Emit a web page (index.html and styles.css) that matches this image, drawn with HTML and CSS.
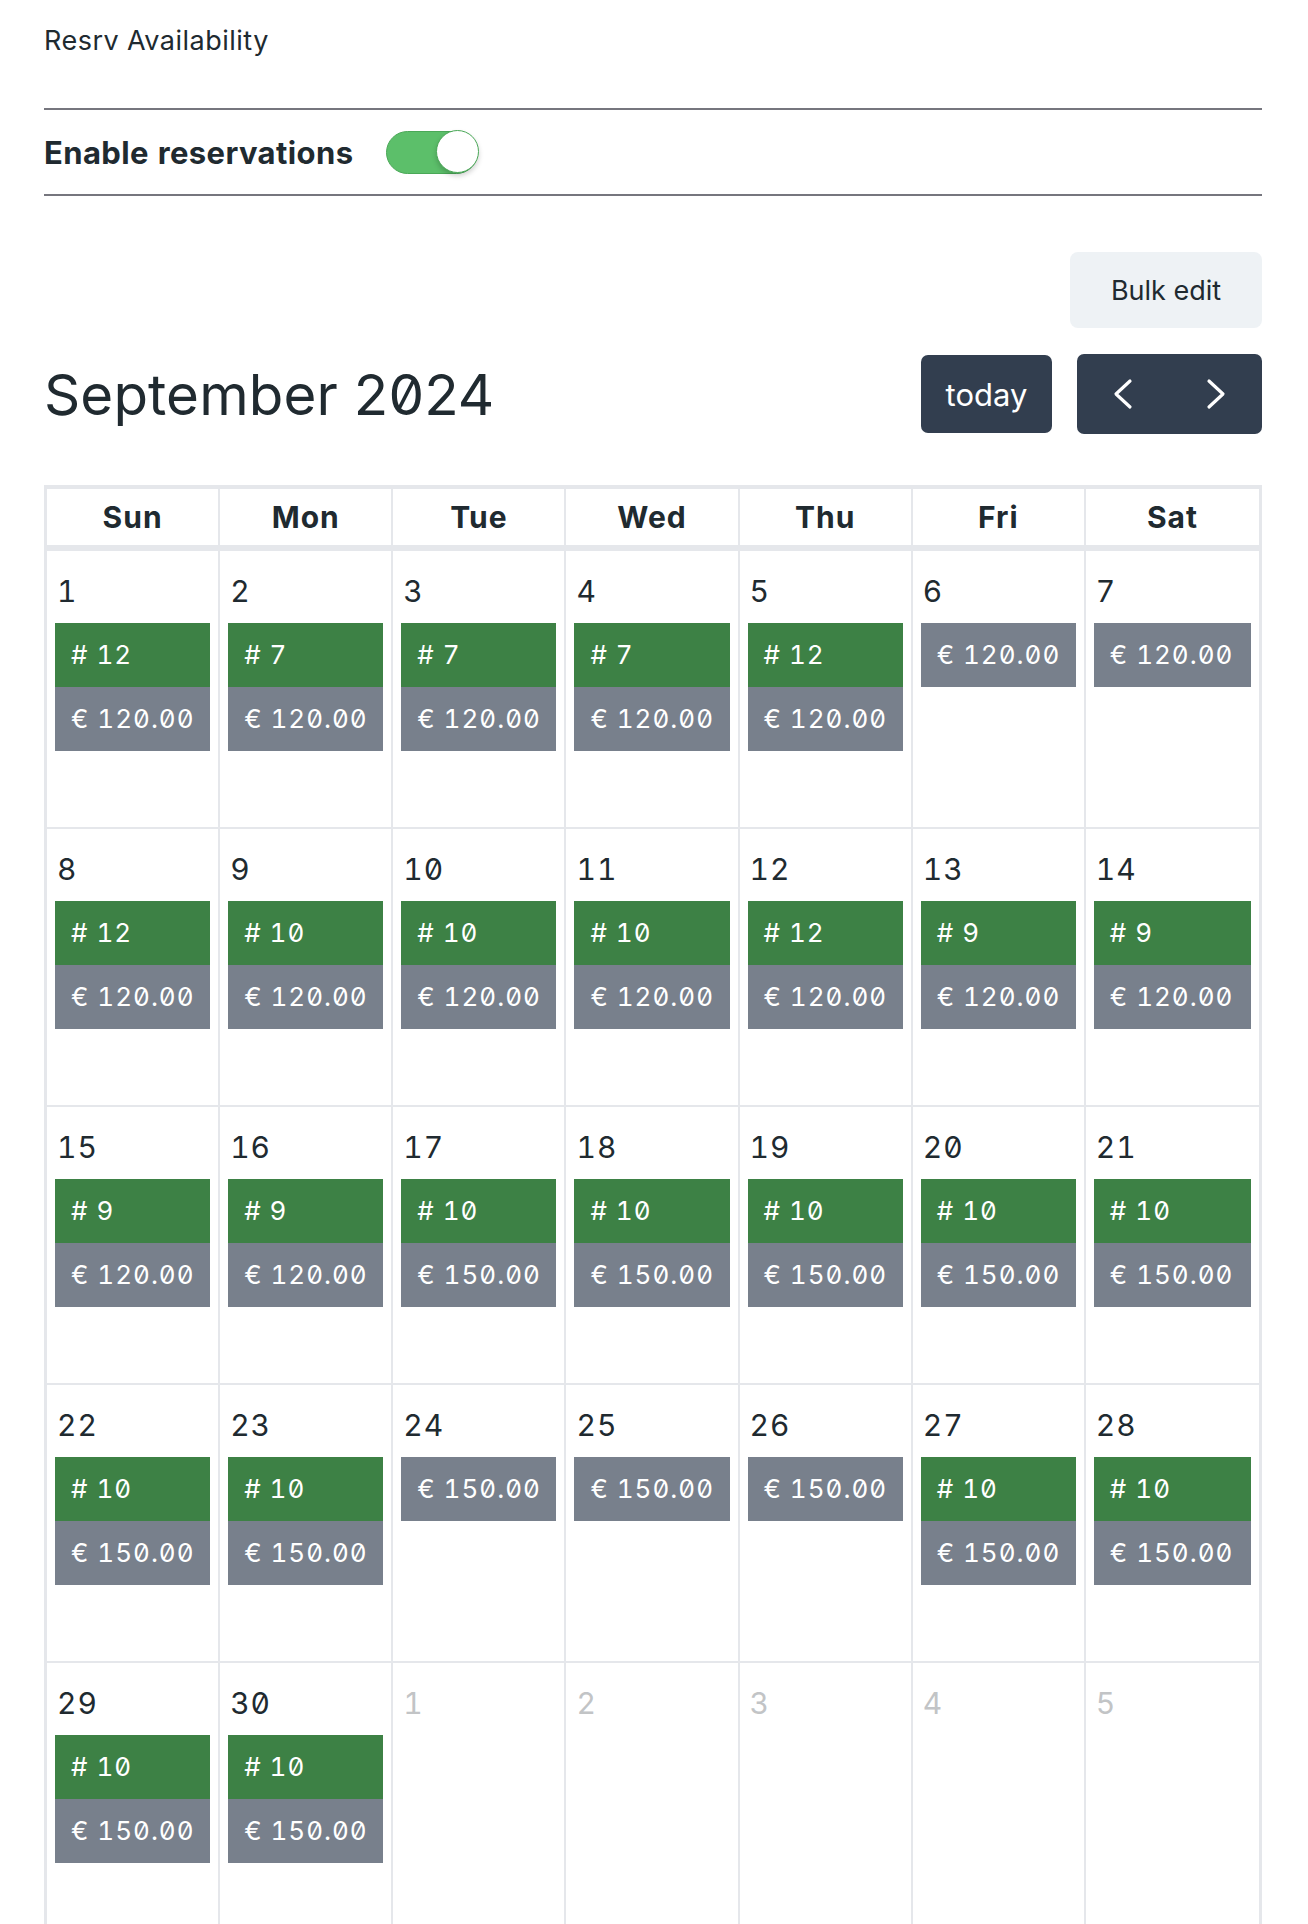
FILE: index.html
```html
<!DOCTYPE html>
<html lang="en">
<head>
<meta charset="utf-8">
<title>Resrv Availability</title>
<link rel="stylesheet" href="styles.css">
</head>
<body>
<div class="page">
  <div class="page-title">Resrv Availability</div>
  <div class="enable-row">
    <span class="enable-label">Enable reservations</span>
    <span class="toggle"><span class="knob"></span></span>
  </div>
  <div class="bulk-row"><button class="bulk-btn">Bulk edit</button></div>
  <div class="toolbar">
    <h2 class="month-title">September 2024</h2>
    <div class="toolbar-actions">
      <button class="btn btn-today">today</button>
      <div class="btn-group">
        <button class="btn btn-nav" aria-label="prev"><svg width="20" height="32" viewBox="0 0 20 32"><polyline points="17,3 3,16 17,29" fill="none" stroke="#fff" stroke-width="3.2" stroke-linecap="round" stroke-linejoin="round"/></svg></button>
        <button class="btn btn-nav" aria-label="next"><svg width="20" height="32" viewBox="0 0 20 32"><polyline points="3,3 17,16 3,29" fill="none" stroke="#fff" stroke-width="3.2" stroke-linecap="round" stroke-linejoin="round"/></svg></button>
      </div>
    </div>
  </div>
  <div class="calendar">
    <div class="cal-head">
      <div class="hcell">Sun</div><div class="hcell">Mon</div><div class="hcell">Tue</div><div class="hcell">Wed</div><div class="hcell">Thu</div><div class="hcell">Fri</div><div class="hcell">Sat</div>
    </div>
    <div class="cal-body">
      <div class="week">
        <div class="day"><div class="num">1</div><div class="ev ev-green"># 12</div><div class="ev ev-gray">€ 120.00</div></div>
        <div class="day"><div class="num">2</div><div class="ev ev-green"># 7</div><div class="ev ev-gray">€ 120.00</div></div>
        <div class="day"><div class="num">3</div><div class="ev ev-green"># 7</div><div class="ev ev-gray">€ 120.00</div></div>
        <div class="day"><div class="num">4</div><div class="ev ev-green"># 7</div><div class="ev ev-gray">€ 120.00</div></div>
        <div class="day"><div class="num">5</div><div class="ev ev-green"># 12</div><div class="ev ev-gray">€ 120.00</div></div>
        <div class="day"><div class="num">6</div><div class="ev ev-gray">€ 120.00</div></div>
        <div class="day"><div class="num">7</div><div class="ev ev-gray">€ 120.00</div></div>
      </div>
      <div class="week">
        <div class="day"><div class="num">8</div><div class="ev ev-green"># 12</div><div class="ev ev-gray">€ 120.00</div></div>
        <div class="day"><div class="num">9</div><div class="ev ev-green"># 10</div><div class="ev ev-gray">€ 120.00</div></div>
        <div class="day"><div class="num">10</div><div class="ev ev-green"># 10</div><div class="ev ev-gray">€ 120.00</div></div>
        <div class="day"><div class="num">11</div><div class="ev ev-green"># 10</div><div class="ev ev-gray">€ 120.00</div></div>
        <div class="day"><div class="num">12</div><div class="ev ev-green"># 12</div><div class="ev ev-gray">€ 120.00</div></div>
        <div class="day"><div class="num">13</div><div class="ev ev-green"># 9</div><div class="ev ev-gray">€ 120.00</div></div>
        <div class="day"><div class="num">14</div><div class="ev ev-green"># 9</div><div class="ev ev-gray">€ 120.00</div></div>
      </div>
      <div class="week">
        <div class="day"><div class="num">15</div><div class="ev ev-green"># 9</div><div class="ev ev-gray">€ 120.00</div></div>
        <div class="day"><div class="num">16</div><div class="ev ev-green"># 9</div><div class="ev ev-gray">€ 120.00</div></div>
        <div class="day"><div class="num">17</div><div class="ev ev-green"># 10</div><div class="ev ev-gray">€ 150.00</div></div>
        <div class="day"><div class="num">18</div><div class="ev ev-green"># 10</div><div class="ev ev-gray">€ 150.00</div></div>
        <div class="day"><div class="num">19</div><div class="ev ev-green"># 10</div><div class="ev ev-gray">€ 150.00</div></div>
        <div class="day"><div class="num">20</div><div class="ev ev-green"># 10</div><div class="ev ev-gray">€ 150.00</div></div>
        <div class="day"><div class="num">21</div><div class="ev ev-green"># 10</div><div class="ev ev-gray">€ 150.00</div></div>
      </div>
      <div class="week">
        <div class="day"><div class="num">22</div><div class="ev ev-green"># 10</div><div class="ev ev-gray">€ 150.00</div></div>
        <div class="day"><div class="num">23</div><div class="ev ev-green"># 10</div><div class="ev ev-gray">€ 150.00</div></div>
        <div class="day"><div class="num">24</div><div class="ev ev-gray">€ 150.00</div></div>
        <div class="day"><div class="num">25</div><div class="ev ev-gray">€ 150.00</div></div>
        <div class="day"><div class="num">26</div><div class="ev ev-gray">€ 150.00</div></div>
        <div class="day"><div class="num">27</div><div class="ev ev-green"># 10</div><div class="ev ev-gray">€ 150.00</div></div>
        <div class="day"><div class="num">28</div><div class="ev ev-green"># 10</div><div class="ev ev-gray">€ 150.00</div></div>
      </div>
      <div class="week">
        <div class="day"><div class="num">29</div><div class="ev ev-green"># 10</div><div class="ev ev-gray">€ 150.00</div></div>
        <div class="day"><div class="num">30</div><div class="ev ev-green"># 10</div><div class="ev ev-gray">€ 150.00</div></div>
        <div class="day other"><div class="num">1</div></div>
        <div class="day other"><div class="num">2</div></div>
        <div class="day other"><div class="num">3</div></div>
        <div class="day other"><div class="num">4</div></div>
        <div class="day other"><div class="num">5</div></div>
      </div>
    </div>
  </div>
</div>
</body>
</html>
```

FILE: styles.css
```css
* { box-sizing: border-box; }
html, body { margin: 0; padding: 0; background: #ffffff; }
body {
  font-family: Inter, "Noto Sans", "Liberation Sans", sans-serif;
  color: #202a30;
  font-feature-settings: "zero" 1, "tnum" 1;
}
.page {
  width: 1218px;
  margin-left: 44px;
  padding-top: 21px;
}
.page-title {
  font-size: 27px;
  line-height: 40px;
  letter-spacing: 0.5px;
  height: 89px;
  border-bottom: 2px solid #76767e;
}
.enable-row {
  display: flex;
  align-items: center;
  gap: 33px;
  height: 86px;
  border-bottom: 2px solid #76767e;
}
.enable-label {
  font-size: 31px;
  font-weight: 700;
  letter-spacing: 0.4px;
}
.toggle {
  position: relative;
  display: inline-block;
  width: 92px;
  height: 43px;
  border-radius: 22px;
  background: #5cbf6a;
  border: 1.5px solid #4aa857;
}
.knob {
  position: absolute;
  right: -1.5px;
  top: -1.5px;
  width: 43px;
  height: 43px;
  border-radius: 50%;
  background: #ffffff;
  border: 1.5px solid #4aa857;
  box-shadow: 0 3px 5px rgba(0,0,0,0.18);
}
.bulk-row {
  display: flex;
  justify-content: flex-end;
  padding-top: 56px;
}
.bulk-btn {
  font-family: inherit;
  font-size: 27px;
  color: #202a30;
  background: #eef2f5;
  border: none;
  border-radius: 8px;
  width: 192px;
  height: 76px;
  padding: 0;
}
.toolbar {
  display: flex;
  justify-content: space-between;
  align-items: center;
  margin-top: 26px;
  height: 80px;
}
.month-title {
  margin: 0;
  font-size: 56.5px;
  font-weight: 400;
  letter-spacing: 0.1px;
  font-feature-settings: "zero" 1;
}
.toolbar-actions {
  display: flex;
  align-items: center;
  gap: 25px;
}
.btn {
  font-family: inherit;
  color: #ffffff;
  background: #323e4f;
  border: none;
  padding: 0;
}
.btn-today {
  width: 131px;
  height: 78px;
  font-size: 31px;
  border-radius: 7px;
}
.btn-group {
  display: flex;
  border-radius: 7px;
  overflow: hidden;
}
.btn-nav {
  width: 92.5px;
  height: 80px;
  display: flex;
  align-items: center;
  justify-content: center;
}
.calendar {
  margin-top: 51px;
  border: 3px solid #e5e7eb;
  border-top-width: 4px;
  border-bottom: none;
}
.cal-head {
  display: grid;
  grid-template-columns: repeat(7, 1fr);
  border-bottom: 6px solid #e5e7eb;
}
.hcell {
  height: 56px;
  padding-bottom: 1px;
  display: flex;
  align-items: center;
  justify-content: center;
  font-size: 30px;
  font-weight: 700;
  letter-spacing: 1px;
  border-right: 2px solid #e5e7eb;
}
.hcell:last-child { border-right: none; }
.week {
  display: grid;
  grid-template-columns: repeat(7, 1fr);
  height: 278px;
  border-bottom: 2px solid #e5e7eb;
}
.day {
  border-right: 2px solid #e5e7eb;
  padding: 22px 8px 0 8px;
}
.day:last-child { border-right: none; }
.num {
  font-size: 30px;
  line-height: 36px;
  margin-bottom: 14px;
  padding-left: 2px;
  letter-spacing: 1px;
}
.day.other .num { color: #c2c4c6; }
.ev {
  height: 64px;
  line-height: 64px;
  font-size: 26px;
  color: #ffffff;
  padding-left: 16px;
  letter-spacing: 1px;
  white-space: nowrap;
}
.ev-green { background: #3d8145; }
.ev-gray { background: #78808c; }
```
